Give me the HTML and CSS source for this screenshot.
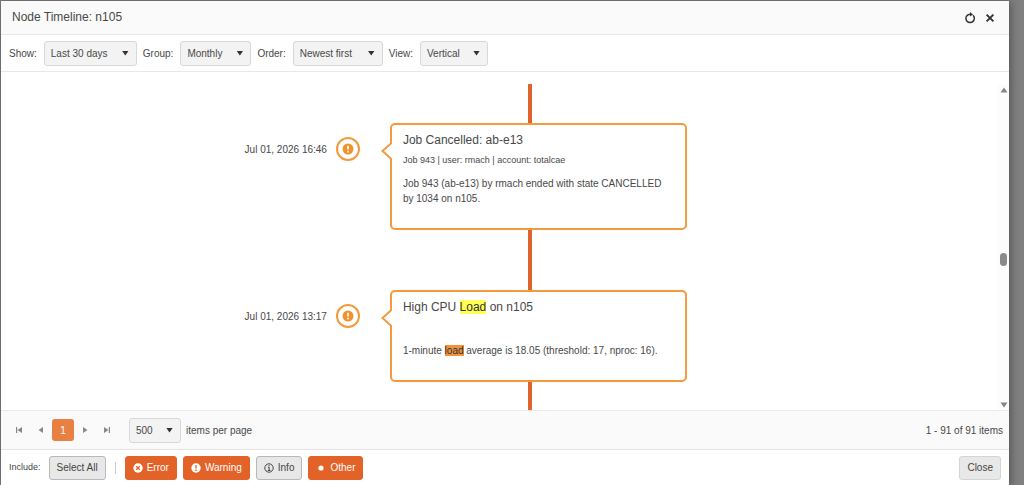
FILE: index.html
```html
<!DOCTYPE html>
<html lang="en">
<head>
<meta charset="utf-8">
<title>Node Timeline: n105</title>
<link rel="stylesheet" href="styles.css">
</head>
<body>
<main class="window">
  <header class="titlebar">
    <h1 class="title">Node Timeline: n105</h1>
    <button class="icon-btn" type="button" aria-label="Refresh">
      <svg width="12" height="12" viewBox="0 0 12 12"><path d="M9 3.300A4.200 4.200 0 1 1 3.500 3.100Q4.700 2.200 6.500 2.200" fill="none" stroke="#333" stroke-width="1.500"/><path d="M6 0V4.600L9 2.400Z" fill="#333"/></svg>
    </button>
    <button class="icon-btn" type="button" aria-label="Close window">
      <svg width="12" height="12" viewBox="0 0 12 12"><path d="M2.600 2.600L9.400 9.400M9.400 2.600L2.600 9.400" stroke="#333" stroke-width="1.900"/></svg>
    </button>
  </header>

  <div class="toolbar">
    <label for="show">Show:</label>
    <span class="picker picker-range"><select id="show"><option>Last 30 days</option></select></span>
    <label for="group">Group:</label>
    <span class="picker picker-group"><select id="group"><option>Monthly</option></select></span>
    <label for="order">Order:</label>
    <span class="picker picker-order"><select id="order"><option>Newest first</option></select></span>
    <label for="view">View:</label>
    <span class="picker picker-view"><select id="view"><option>Vertical</option></select></span>
  </div>

  <div class="scroller">
    <section class="timeline">
      <article class="event">
        <div class="when">
          <time datetime="2026-07-01T16:46">Jul 01, 2026 16:46</time>
          <span class="marker"><svg width="12" height="12" viewBox="0 0 12 12"><circle cx="6" cy="6" r="5.500" fill="#f0932f"/><path d="M6 2.700V6.600M6 7.800V9.400" stroke="#fff" stroke-width="1.600"/></svg></span>
        </div>
        <div class="card">
          <svg class="pointer" width="11" height="18" viewBox="0 0 11 18"><path d="M11 0.500L1.500 9L11 17.500" fill="#fff" stroke="#f29a3c" stroke-width="2"/></svg>
          <h2 class="card-title">Job Cancelled: ab-e13</h2>
          <p class="card-sub">Job 943 | user: rmach | account: totalcae</p>
          <p class="card-text">Job 943 (ab-e13) by rmach ended with state CANCELLED<br>by 1034 on n105.</p>
        </div>
      </article>
      <article class="event">
        <div class="when">
          <time datetime="2026-07-01T13:17">Jul 01, 2026 13:17</time>
          <span class="marker"><svg width="12" height="12" viewBox="0 0 12 12"><circle cx="6" cy="6" r="5.500" fill="#f0932f"/><path d="M6 2.700V6.600M6 7.800V9.400" stroke="#fff" stroke-width="1.600"/></svg></span>
        </div>
        <div class="card">
          <svg class="pointer" width="11" height="18" viewBox="0 0 11 18"><path d="M11 0.500L1.500 9L11 17.500" fill="#fff" stroke="#f29a3c" stroke-width="2"/></svg>
          <h2 class="card-title">High CPU <mark>Load</mark> on n105</h2>
          <p class="card-sub"></p>
          <p class="card-text">1-minute <mark class="current">load</mark> average is 18.05 (threshold: 17, nproc: 16).</p>
        </div>
      </article>
    </section>
    <div class="scrollbar" aria-hidden="true">
      <svg width="8" height="6" viewBox="0 0 8 6"><path d="M4 0.500L7.500 5.500H0.500Z" fill="#858585"/></svg>
      <span class="thumb"></span>
      <svg width="8" height="6" viewBox="0 0 8 6"><path d="M4 5.500L7.500 0.500H0.500Z" fill="#858585"/></svg>
    </div>
  </div>

  <nav class="pager" aria-label="Pages">
    <button class="page" type="button" aria-label="First page"><svg width="8" height="8" viewBox="0 0 8 8"><path d="M1 1H2.200V7H1ZM7 1V7L2.500 4Z" fill="#888"/></svg></button>
    <button class="page" type="button" aria-label="Previous page"><svg width="8" height="8" viewBox="0 0 8 8"><path d="M6 1V7L1.500 4Z" fill="#888"/></svg></button>
    <button class="page active" type="button">1</button>
    <button class="page" type="button" aria-label="Next page"><svg width="8" height="8" viewBox="0 0 8 8"><path d="M2 1V7L6.500 4Z" fill="#888"/></svg></button>
    <button class="page" type="button" aria-label="Last page"><svg width="8" height="8" viewBox="0 0 8 8"><path d="M1 1V7L5.500 4ZM5.800 1H7V7H5.800Z" fill="#888"/></svg></button>
    <span class="picker picker-size"><select id="size"><option>500</option></select></span>
    <label for="size">items per page</label>
    <span class="range">1 - 91 of 91 items</span>
  </nav>

  <footer class="footer">
    <span class="include">Include:</span>
    <button class="btn select-all" type="button">Select All</button>
    <span class="divider"></span>
    <button class="btn primary" type="button"><svg width="10" height="10" viewBox="0 0 10 10"><circle cx="5" cy="5" r="4.700" fill="#fff"/><path d="M3.200 3.200L6.800 6.800M6.800 3.200L3.200 6.800" stroke="#e36228" stroke-width="1.300"/></svg>Error</button>
    <button class="btn primary" type="button"><svg width="10" height="10" viewBox="0 0 10 10"><circle cx="5" cy="5" r="4.700" fill="#fff"/><path d="M5 2V5.500M5 6.500V8" stroke="#e36228" stroke-width="1.400"/></svg>Warning</button>
    <button class="btn" type="button"><svg width="10" height="10" viewBox="0 0 10 10"><circle cx="5" cy="5" r="4.200" fill="none" stroke="#444"/><path d="M5 2V3.200M3.900 4.300H5.200V7.300M3.700 7.400H6.500" fill="none" stroke="#444"/></svg>Info</button>
    <button class="btn primary" type="button"><svg width="10" height="10" viewBox="0 0 10 10"><circle cx="5" cy="5" r="2.600" fill="#fff"/></svg>Other</button>
    <button class="btn close" type="button">Close</button>
  </footer>
</main>
</body>
</html>
```
FILE: styles.css
```css
* {
  box-sizing: border-box;
}

body {
  margin: 0;
  padding: 1px 15px 0 1px;
  height: 100vh;
  overflow: hidden;
  background: #808080;
  color: #484848;
  font: 10px/15px "Liberation Sans", Arial, sans-serif;
}

h1, h2, p {
  margin: 0;
  font-weight: normal;
}

button, select {
  font: inherit;
  color: inherit;
}

.window {
  display: flex;
  flex-direction: column;
  height: 100%;
  background: #fff;
  box-shadow: 1px 1px 8px 1px rgba(0, 0, 0, 0.35);
}

.titlebar {
  display: flex;
  align-items: center;
  gap: 4px;
  height: 34px;
  padding: 0 11px;
  background: #fafafa;
  border-bottom: 1px solid #e8e8e8;
}

.title {
  margin-right: auto;
  font-size: 12px;
}

.icon-btn {
  display: grid;
  place-items: center;
  width: 16px;
  height: 16px;
  padding: 0;
  border: 0;
  background: none;
}

.toolbar {
  display: flex;
  align-items: center;
  gap: 6px;
  height: 37px;
  padding: 0 8px;
  border-bottom: 1px solid #e8e8e8;
}

.toolbar label {
  margin-right: 1px;
}

.picker {
  position: relative;
  height: 25px;
}

.picker::after {
  content: "";
  position: absolute;
  top: 10px;
  right: 8px;
  width: 7px;
  height: 5px;
  background: #333;
  clip-path: polygon(0 0, 100% 0, 50% 100%);
  pointer-events: none;
}

.picker select {
  appearance: none;
  width: 100%;
  height: 100%;
  padding: 0 6px;
  border: 1px solid #d8d8d8;
  border-radius: 3px;
  background: #f3f3f3;
}

.picker-range {
  width: 93px;
}

.picker-group {
  width: 71px;
}

.picker-order {
  width: 90px;
}

.picker-view {
  width: 68px;
}

.picker-size {
  width: 52px;
  margin: 0 5px 0 11px;
}

.scroller {
  display: flex;
  flex: 1;
  min-height: 0;
  padding-top: 12px;
}

.timeline {
  position: relative;
  flex: 1;
  overflow: hidden;
}

.timeline::before {
  content: "";
  position: absolute;
  top: 0;
  bottom: 0;
  left: calc(36% + 168px);
  width: 4px;
  background: #e0622c;
}

.event {
  display: flex;
  align-items: flex-start;
  margin-top: 39px;
}

.event + .event {
  margin-top: 60px;
}

.when {
  display: flex;
  align-items: center;
  justify-content: flex-end;
  gap: 9px;
  width: 36%;
  margin-top: 14px;
}

.marker {
  display: grid;
  place-items: center;
  width: 24px;
  height: 24px;
  border: 2px solid #f29a3c;
  border-radius: 50%;
}

.card {
  position: relative;
  width: 297px;
  margin-left: 30px;
  padding: 6px 11px 22px;
  border: 2px solid #f29a3c;
  border-radius: 5px;
  background: #fff;
}

.pointer {
  position: absolute;
  top: 17px;
  left: -11px;
}

.card-title {
  font-size: 12px;
  line-height: 18px;
}

.card-sub {
  min-height: 14px;
  margin: 4px 0 9px;
  font-size: 9px;
  line-height: 14px;
}

mark {
  background: #ffff54;
  color: #333;
}

mark.current {
  background: #f0923f;
}

.scrollbar {
  display: flex;
  flex-direction: column;
  align-items: center;
  justify-content: space-between;
  width: 11px;
  padding: 3px 0 2px;
  background: #fcfcfc;
}

.thumb {
  width: 7px;
  height: 13px;
  margin-top: 24px;
  border-radius: 4px;
  background: #8a8a8a;
}

.pager {
  display: flex;
  align-items: center;
  height: 40px;
  padding: 0 6px 0 7px;
  background: #fafafa;
  border-top: 1px solid #ebebeb;
  border-bottom: 1px solid #e4e4e4;
}

.page {
  display: grid;
  place-items: center;
  width: 22px;
  height: 22px;
  padding: 0;
  border: 0;
  border-radius: 3px;
  background: none;
}

.page.active {
  background: #e88043;
  color: #fff;
}

.range {
  margin-left: auto;
}

.footer {
  display: flex;
  align-items: center;
  gap: 6px;
  height: 35px;
  padding: 0 8px;
}

.include {
  font-size: 9px;
}

.btn {
  display: flex;
  align-items: center;
  gap: 4px;
  height: 24px;
  padding: 0 7px;
  border: 1px solid #b8b8b8;
  border-radius: 3px;
  background: #e8e8e8;
  color: #444;
}

.btn.primary {
  border-color: #e36228;
  background: #e36228;
  color: #fff;
}

.select-all {
  margin-left: 2px;
}

.divider {
  width: 1px;
  height: 12px;
  margin: 0 3px;
  background: #ccc;
}

.btn.close {
  margin-left: auto;
  border-color: #d4d4d4;
}
```
